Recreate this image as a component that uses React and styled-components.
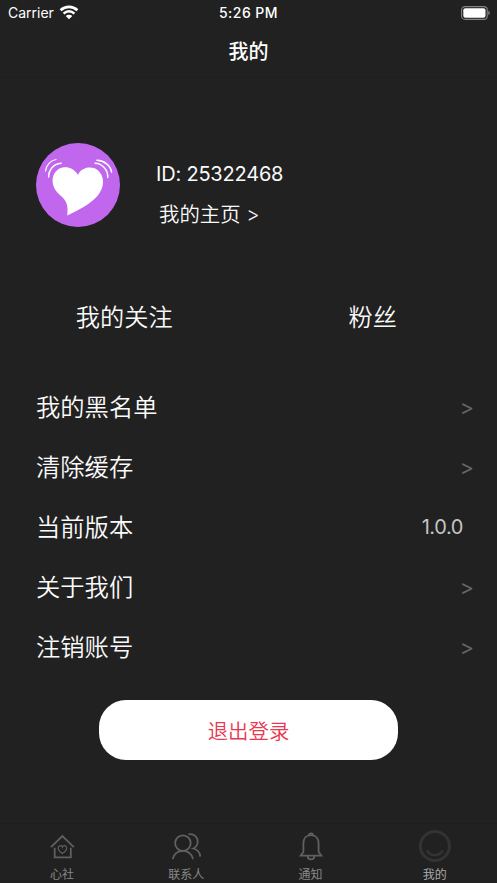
import React from 'react';
import styled, { createGlobalStyle } from 'styled-components';

const GlobalStyle = createGlobalStyle`
  * {
    box-sizing: border-box;
  }

  body {
    margin: 0;
    background: #212121;
    color: #fafafa;
    font-family: Inter, 'Noto Sans CJK SC', sans-serif;
  }
`;

const menuItems = [
  { label: '我的黑名单' },
  { label: '清除缓存' },
  { label: '当前版本', value: '1.0.0' },
  { label: '关于我们' },
  { label: '注销账号' },
];

const WifiIcon = () => (
  <svg width="20" height="15" viewBox="0 0 20 15" fill="none" stroke="#fff">
    <path d="M1.6 5.2C6.4 0.7 13.6 0.7 18.4 5.2" strokeWidth="2.7" />
    <path d="M4.6 8.6C7.7 5.6 12.3 5.6 15.4 8.6" strokeWidth="2.5" />
    <path d="M6.7 10.9C8.6 9.2 11.4 9.2 13.3 10.9L10 14.2Z" fill="#fff" stroke="none" />
  </svg>
);

const BatteryIcon = () => (
  <svg width="30" height="14" viewBox="0 0 30 14">
    <rect x="0.6" y="0.6" width="25.6" height="12.8" rx="3.4" fill="none" stroke="#858585" strokeWidth="1.1" />
    <rect x="2.3" y="2.3" width="22.2" height="9.4" rx="2" fill="#fff" />
    <path d="M27.3 4.8C29.3 5.4 29.3 8.6 27.3 9.2Z" fill="#858585" />
  </svg>
);

const HeartLogo = () => (
  <svg width="84" height="84" viewBox="0 0 84 84">
    <circle cx="42" cy="42" r="42" fill="#c167ee" />
    <path
      d="M42 32C38.5 26 33 23.8 28 24.3C20.5 25 15.8 32 16.7 39.5C17.5 47 22 50 26.4 54.3C31 59 32.3 63.5 31.2 72.5C42 67.5 54 61.5 61.8 52.5C66 47.5 68.3 40 66.3 34C64 27 58.5 23.8 52.5 24.5C47 25.2 43.6 28 42 32Z"
      fill="#fff"
    />
    <g fill="none" stroke="#fff" strokeLinecap="round">
      <path d="M9.5 28C10.2 22.5 14 17.5 20 16.5" strokeWidth="1.2" />
      <path d="M12.7 34C12.5 27 17.5 20.7 25.2 20.2" strokeWidth="1.5" />
      <path d="M61 17.3C68 17.5 74.8 22.5 75.5 29" strokeWidth="1.5" />
      <path d="M59 20.3C66.5 20.5 72.2 27 71.7 34.5" strokeWidth="1.4" />
    </g>
  </svg>
);

const HomeIcon = () => (
  <>
    <path d="M5 17.2L16.4 6L27.8 17.2" />
    <path d="M8.7 17.8V27.3H24.8V17.8" />
    <path d="M16.4 23.5C13.8 21.7 12.2 20 12.2 18C12.2 15.2 15.6 14.7 16.4 17.1C17.2 14.7 20.6 15.2 20.6 18C20.6 20 19 21.7 16.4 23.5Z" strokeWidth="1.2" />
  </>
);

const ContactsIcon = () => (
  <>
    <circle cx="12.9" cy="13.1" r="7.8" />
    <path d="M2.7 29.2C4.2 18.2 21.5 18.2 23 29.2" />
    <path d="M18.5 4.4C23.5 3.2 28 7 27.7 12C27.5 15.2 25.7 17.5 23.3 18.5C27.3 19.6 30 22.2 30.2 26.6" />
  </>
);

const BellIcon = () => (
  <>
    <path d="M8.4 22V13.5C8.4 8.5 11.4 5.2 16 5.2C20.6 5.2 23.6 8.5 23.6 13.5V22L26.4 25.7H5.6Z" />
    <path d="M14 5.3C14 2.6 18 2.6 18 5.3" />
    <path d="M12.6 26C12.8 30.6 19.2 30.6 19.4 26" />
  </>
);

const SmileIcon = () => (
  <>
    <circle cx="15.9" cy="16" r="14.5" />
    <path d="M8 20.2C11.2 26.7 20.6 26.7 23.8 20.2" strokeWidth="2.6" />
  </>
);

const tabs = [
  { label: '心社', Icon: HomeIcon },
  { label: '联系人', Icon: ContactsIcon },
  { label: '通知', Icon: BellIcon },
  { label: '我的', Icon: SmileIcon, active: true },
];

const App = () => (
  <Screen>
    <GlobalStyle />
    <StatusBar>
      <Carrier>
        <span>Carrier</span>
        <WifiIcon />
      </Carrier>
      <Clock>5:26 PM</Clock>
      <Battery>
        <BatteryIcon />
      </Battery>
    </StatusBar>
    <NavBar>我的</NavBar>

    <Content>
      <Profile>
        <HeartLogo />
        <ProfileText>
          <UserId>ID: 25322468</UserId>
          <HomeLink>我的主页 &gt;</HomeLink>
        </ProfileText>
      </Profile>

      <Stats>
        <Stat>我的关注</Stat>
        <Stat>粉丝</Stat>
      </Stats>

      <Menu>
        {menuItems.map(({ label, value }) => (
          <MenuRow key={label}>
            <span>{label}</span>
            {value ? <Version>{value}</Version> : <Arrow>&gt;</Arrow>}
          </MenuRow>
        ))}
      </Menu>

      <LogoutButton>退出登录</LogoutButton>
    </Content>

    <TabBar>
      {tabs.map(({ label, Icon, active }) => (
        <Tab key={label} $active={active}>
          <TabIcon viewBox="0 0 32 32" $active={active}>
            <Icon />
          </TabIcon>
          <span>{label}</span>
        </Tab>
      ))}
    </TabBar>
  </Screen>
);

const Screen = styled.div`
  display: flex;
  flex-direction: column;
  width: 497px;
  height: 883px;
  overflow: hidden;
`;

const StatusBar = styled.header`
  display: grid;
  grid-template-columns: 1fr auto 1fr;
  align-items: center;
  height: 25px;
  padding: 0 6px 0 8px;
  color: #fff;
`;

const Carrier = styled.div`
  display: flex;
  align-items: center;
  gap: 5px;
  font-size: 14px;
`;

const Clock = styled.div`
  margin-left: -2px;
  font-size: 14px;
  font-weight: 500;
  letter-spacing: 0.45px;
`;

const Battery = styled.div`
  display: flex;
  justify-content: flex-end;
`;

const NavBar = styled.div`
  height: 53px;
  padding-top: 2px;
  border-bottom: 1px solid #1e1e1e;
  color: #fff;
  font-size: 20px;
  font-weight: 500;
  line-height: 50px;
  text-align: center;
`;

const Content = styled.main`
  display: flex;
  flex: 1;
  flex-direction: column;
`;

const Profile = styled.section`
  display: flex;
  gap: 36px;
  padding: 65px 36px 0;
`;

const ProfileText = styled.div`
  display: flex;
  flex-direction: column;
  gap: 10px;
  padding-top: 16px;
  font-size: 20px;
  line-height: 30px;
`;

const UserId = styled.div`
  letter-spacing: -0.2px;
`;

const HomeLink = styled.a`
  padding: 1px 0 0 3px;
  font-size: 20.4px;
  font-weight: 350;
`;

const Stats = styled.section`
  display: flex;
  height: 60px;
  margin-top: 58px;
`;

const Stat = styled.div`
  flex: 1;
  font-size: 24.2px;
  font-weight: 350;
  line-height: 60px;
  text-align: center;
`;

const Menu = styled.ul`
  margin: 29px 0 0;
  padding: 0 24px 0 36px;
  list-style: none;
`;

const MenuRow = styled.li`
  display: flex;
  justify-content: space-between;
  height: 60px;
  font-size: 24.3px;
  font-weight: 350;
  line-height: 60px;
`;

const Arrow = styled.span`
  margin-right: -1px;
  color: #666;
  font-size: 21.5px;
  font-weight: 400;
`;

const Version = styled.span`
  padding-right: 10px;
  color: #c4c4c4;
  font-size: 20px;
  font-weight: 400;
  letter-spacing: -0.4px;
`;

const LogoutButton = styled.button`
  align-self: center;
  width: 299px;
  height: 60px;
  margin-top: 23px;
  padding: 0;
  border: 0;
  border-radius: 27px;
  background: #fff;
  color: #e8384f;
  font-family: inherit;
  font-size: 20.4px;
  font-weight: 350;
`;

const TabBar = styled.nav`
  display: flex;
  height: 60px;
  border-top: 1px solid #1e1e1e;
`;

const Tab = styled.div`
  display: flex;
  flex: 1;
  flex-direction: column;
  align-items: center;
  padding-top: 6px;
  color: ${({ $active }) => ($active ? '#aaa' : '#888')};
  font-size: 12px;
  line-height: 25px;
`;

const TabIcon = styled.svg`
  flex-shrink: 0;
  width: 32px;
  height: 32px;
  fill: none;
  stroke: ${({ $active }) => ($active ? '#333' : '#606060')};
  stroke-width: ${({ $active }) => ($active ? 3 : 1.8)};
`;

export default App;
